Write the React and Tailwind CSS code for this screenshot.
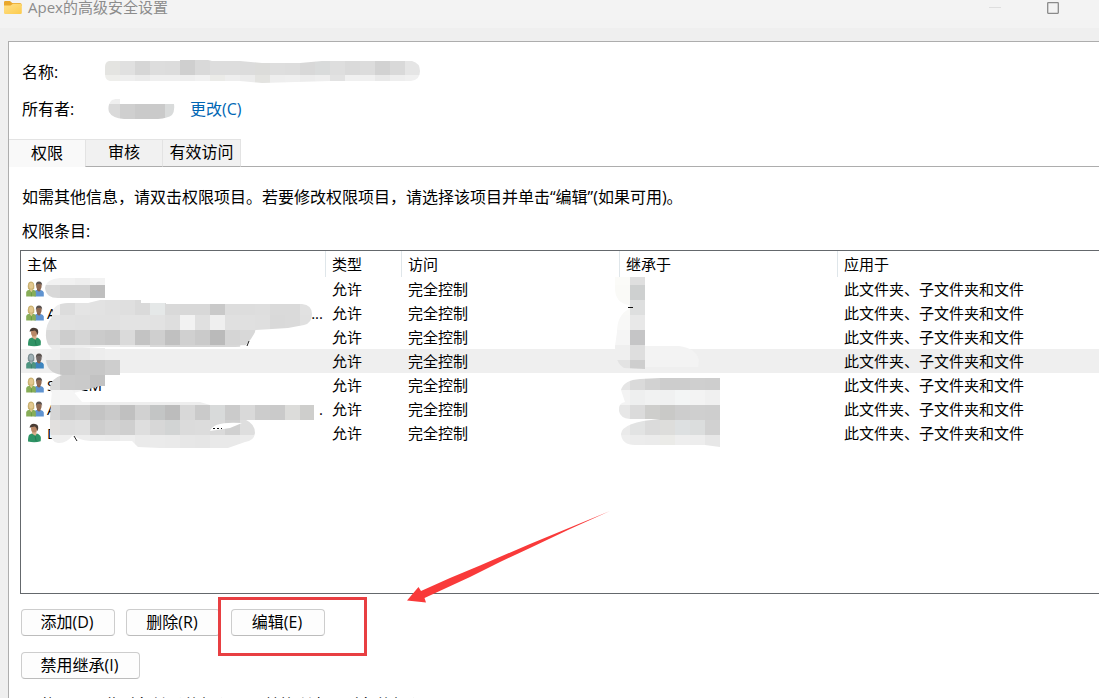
import React from "react";

function Mosaic({ id, shape, rows }) {
  return (
    <g clipPath={`url(#${id})`}>
      <clipPath id={id}>
        <path d={shape} />
      </clipPath>
      {rows.map(([x, y, height, colors]) =>
        colors
          .split(" ")
          .map((c, i) => (
            <rect key={`${x}-${y}-${i}`} x={x + i * 15} y={y} width="15.2" height={height} fill={`#${c}`} />
          ))
      )}
    </g>
  );
}

function FolderIcon() {
  return (
    <svg width="20" height="16" viewBox="0 0 20 16" aria-hidden="true">
      <defs>
        <linearGradient id="folder" x1="0" y1="0" x2="1" y2="1">
          <stop offset="0" stopColor="#ffe08a" />
          <stop offset="1" stopColor="#fccb4c" />
        </linearGradient>
      </defs>
      <path d="M1 2.2Q1 1 2.200 1H7l2.200 2H17q1.600 0 1.600 1.500V6H1z" fill="#e9a72c" />
      <path d="M1 5.500h6.500L10 3.800h7.400q1.400 0 1.400 1.300v7.700q0 1.200-1.300 1.200H2.300Q1 14 1 12.800z" fill="url(#folder)" />
    </svg>
  );
}

function GroupIcon({ muted }) {
  const hair = muted ? "#7d8f93" : "#c9b170";
  const face = muted ? "#9fb0b5" : "#e3c88f";
  const shirt = muted ? "#4d9480" : "#87ad57";
  return (
    <svg width="18" height="16" viewBox="0 0 18 16" className="shrink-0" aria-hidden="true">
      <path d="M8.500 15.500V11q.4-1.700 2.700-2.200l2 .8 1.600-.7q2.700.6 3 2.600v4z" fill={muted ? "#3c84bf" : "#5f93d0"} />
      <path d="M11 7h3.600v2.200l-1.500 1.600L11 9.300z" fill="#8a6048" />
      <ellipse cx="12.900" cy="4.900" rx="2.700" ry="3.500" fill={muted ? "#6f6563" : "#8f6a52"} />
      <path d="M9.900 5Q9.600.6 13 .6q3.500.2 3.100 4.400l-1-1.900-3.800-.2z" fill="#5a524e" />
      <path d="M2 7.500Q1 .7 5 .5q4 .2 3.200 7L6.700 9H3.400z" fill={hair} />
      <ellipse cx="5.200" cy="4.800" rx="2.100" ry="3" fill={face} />
      <path d="M.2 15.500V11q.4-1.900 3.300-2.300l1.800 1 1.800-1q2.600.5 2.700 2.300v4.500z" fill={shirt} />
      <path d="M3.900 8.600h2.800l-1.300 3z" fill={face} />
      <path d="M5.400 11.300v4" stroke={muted ? "#397967" : "#65923f"} strokeWidth=".8" />
    </svg>
  );
}

function UserIcon() {
  return (
    <svg width="18" height="20" viewBox="0 0 18 20" className="shrink-0" aria-hidden="true">
      <path d="M2 18.500q0-6 1.600-7l3-1.300 2.700 1.500 1.700-1.200q3.500 1.300 3.900 4.200l-.2 3.600q-6 1.600-12.700.2z" fill="#2f9365" />
      <path d="M6 8h4.500v3l-1.200 2L6 10.600z" fill="#d9b08d" />
      <ellipse cx="8.100" cy="5.600" rx="3.100" ry="4" fill="#b98867" />
      <path d="M3.700 5Q3.500 1 7.900.8q4.900.2 4.300 5l-.9 2.400Q10.900 4.600 9 3.400L4.800 4.300z" fill="#493c34" />
      <path d="M8.900 12.500l1.300 5.800" stroke="#1f7650" strokeWidth=".8" />
    </svg>
  );
}

const entries = [
  { kind: "group", name: "", end: "" },
  { kind: "group", name: "A", end: "..." },
  { kind: "user", name: "", end: "" },
  { kind: "muted", name: "", end: "" },
  { kind: "group", name: "SYSTEM", end: "" },
  { kind: "group", name: "A", end: "." },
  { kind: "user", name: "D", end: "" },
];

function PrincipalIcon({ kind }) {
  return kind === "user" ? <UserIcon /> : <GroupIcon muted={kind === "muted"} />;
}

function Redactions() {
  return (
    <svg
      className="pointer-events-none absolute left-0 top-0"
      width="720"
      height="210"
      viewBox="21 251 720 210"
      aria-hidden="true"
    >
      <Mosaic
        id="m1"
        shape="M105 278H60Q46 279 45 288Q46 298 58 298H105z"
        rows={[
          [45, 270, 15.2, "f2f2f2 f1f1f1 eeeeee f2f2f2"],
          [45, 285, 15, "d8d8d8 d2d2d2 d2d2d2 bfbfbf"],
        ]}
      />
      <Mosaic
        id="m2"
        shape="M52 313Q54 303 68 303H88L100 300H141V303H166V304H302Q312 305 312 314Q312 323 304 325L288 328L256 330Q252 339 245 346Q242 347 230 347L100 347Q80 348 66 349H52Q45 343 46 333Q46 324 52 317z"
        rows={[
          [45, 300, 15.2, "eeeeee dcdcdc e4e4e4 e2e2e2 e0e0e0 dfdfdf dadada e5e8e8 d9d9d9 d8d8d8 d8d8d8 c9c9c9 dddddd dddddd dedede dadada dadada e1e1e1 dcdcdc"],
          [45, 315, 15.2, "e5e5e5 e2e2e2 e1e1e1 e1e1e1 e1e1e1 e3e3e3 e3e3e3 e2e2e2 dedede f2f2f2 e0e0e0 efefef e0e0e0 e0e0e0 dfdfdf d9d9d9 dadada e0e0e0 e3e3e3"],
          [45, 330, 15.2, "dadada cdcdcd d5d5d5 cbcbcb c8c8c8 dadada c3c3c3 cfcfcf c0c0c0 d0d0d0 cacaca bababa d5d5d5 d8d8d8"],
          [45, 345, 6, "ededed efefef efefef eeeeee eeeeee eaeaea e7e7e7 dadada d6d6d6 d6d6d6 d6d6d6 d6d6d6 d8d8d8"],
        ]}
      />
      <Mosaic
        id="m3"
        shape="M57 348Q46 350 46 360Q47 373 62 375Q50 379 50 388Q50 394 57 394H70L85 390L100 386H105V375H120V360H105V348z"
        rows={[
          [45, 345, 15.2, "ededed e5e5e5 e8e8e8 ededed"],
          [45, 360, 15.2, "d2d2d2 c4c4c4 c9c9c9 c8c8c8 cecece"],
          [45, 375, 15.2, "d8d8d8 cbcbcb cacaca c2c2c2"],
          [45, 390, 6, "f0f0f0 f2f2f2 f4f4f4 f8f8f8"],
        ]}
      />
      <Mosaic
        id="m4"
        shape="M52 390H72L82 402H200L210 405H314V420H246Q255 424 255 433Q254 441 245 442L228 448H160L138 447L132 441H90Q78 440 73 435Q66 444 58 443Q50 442 50 430V419L51 402z"
        rows={[
          [45, 390, 15.2, "f4f4f4 f5f5f5 f5f5f5 eeeeee eeeeee eeeeee eeeeee eeeeee eeeeee eeeeee eeeeee eeeeee"],
          [45, 405, 15.2, "d5d5d5 cacaca cecece c4c4c4 cacaca c0c0c0 d1d1d1 c3c5c5 bcbcbc d8d8d8 cacaca d8dada cbcbcb d9d9d9 cccccc cacaca dcdcda cececc"],
          [45, 420, 15.2, "e2e0de dedede e0e0e0 cdcdcd d2d2d2 cfcfcf dedede d7d7d7 d2d4d4 dbdbdb dcdcdc dadada d0d0d0 dedede"],
          [45, 435, 15.2, "eeeeee efefef eeeeee ececec ebebeb eeeeee eaeaea ebebeb eaeaea e7e7e7 e6e6e6 e9e9e9 e9e9e9 ebebeb"],
        ]}
      />
      <path d="M210 431Q213 421 242 423L230 428Z" fill="#fff" />
      <path d="M213 428.500h2M217 428.500h2M221 428.500h1" stroke="#111" />
      <path d="M74 436l3 5M249 341l-2 5" stroke="#222" fill="none" />
      <path d="M645 346H679Q696 348 699 360L698 367H645z" fill="#f3f3f3" />
      <Mosaic
        id="m5"
        shape="M615 277H645V369L624 368Q615 363 615 346L617 332Q617 315 629 309V305Q615 303 615 288z"
        rows={[
          [615, 270, 15.2, "fbfbf8 dfdfdf"],
          [615, 285, 15.2, "fafaf7 ced0d0"],
          [615, 300, 15.2, "f9f9f7 dedfdf"],
          [615, 315, 15.2, "f8f8f7 e8e8e8"],
          [615, 330, 15.2, "f5f5f5 c5c5c6"],
          [615, 345, 15.2, "efefef dedede"],
          [615, 360, 10, "e3e3e3 cecece"],
        ]}
      />
      <path d="M628 307.500h5" stroke="#111" />
      <Mosaic
        id="m6"
        shape="M720 378H660L640 379Q624 380 621 390L625 402Q618 403 619 411Q620 418 630 419H660Q622 422 621 434Q622 445 635 445H705L720 447z"
        rows={[
          [615, 375, 15.2, "e5e5e5 dadada d2d2d2 cdcdcd cdcdcd cfcfcf cecece"],
          [615, 390, 15.2, "f3f3f3 eeefef f1f2f2 f0f1f1 f3f5f5 f3f3f3 f0f0f0"],
          [615, 405, 15.2, "e7e7e7 dbdbdb cececc c9c9c7 cdcdcd cfcfcf cecece"],
          [615, 420, 15.2, "eaeaea e2e3e3 dbdbdb dddddb dde0e1 dbdddd d1d1d1"],
          [615, 435, 15.2, "eeeeee ececec ebebeb ebebe8 eeeeee ededed e7e7e7"],
        ]}
      />
    </svg>
  );
}

const pushButton =
  "h-[27px] rounded-[4px] border border-[#cdcdcd] border-b-[#bcbcbc] bg-[#fdfdfd] pb-px pr-0.5 leading-6 text-center whitespace-nowrap";

const tab = "border-[#e3e3e3] pb-0.5 leading-6 whitespace-nowrap";

export default function App() {
  return (
    <div className="flex h-screen flex-col overflow-hidden bg-[#efefef] font-['Open_Sans','Noto_Sans_CJK_SC',sans-serif] text-[16px] leading-6 text-black">
      <header className="flex h-7 shrink-0 items-start justify-between bg-[#f3f3f3] pl-[3px] pr-10 text-[15px] leading-[14px] text-[#8c8c8c]">
        <h1 className="flex gap-[5px]">
          <FolderIcon />
          Apex的高级安全设置
        </h1>
        <div className="flex gap-[46px]">
          <button type="button" aria-label="最小化" className="h-4 w-3">
            <svg width="12" height="16" viewBox="0 0 12 16" aria-hidden="true">
              <path d="M0 7.500h12" stroke="#dedede" />
            </svg>
          </button>
          <button type="button" aria-label="最大化" className="h-4 w-3">
            <svg width="12" height="16" viewBox="0 0 12 16" aria-hidden="true">
              <rect x=".7" y="2.700" width="10.600" height="10.600" rx=".5" fill="none" stroke="#8a8a8a" strokeWidth="1.300" />
            </svg>
          </button>
        </div>
      </header>

      <main className="ml-2 mt-[13px] grow border-l border-t border-[#adadad] bg-white">
        <dl className="pl-[13px] pt-[18px]">
          <div className="flex h-6">
            <dt className="w-[83px]">名称:</dt>
            <dd>
              <svg width="316" height="24" viewBox="105 60 316 24" role="img" aria-label="已隐藏">
                <Mosaic
                  id="name"
                  shape="M109 61H180V60H208L212 61H240L262 63H300L322 61H412Q420 63 420 71Q420 80 411 81H352L330 81L262 83L240 81H110Q105 80 105 74V67Q105 62 109 61z"
                  rows={[
                    [105, 60, 15.2, "e4e4e1 e0e0e0 d6d6d6 dddddd dcdcdc cfcfcf d9d9d9 dddddd dddddd dcdcdc dcdcda dedede dddddd d8d8d8 d9dbdb dedede dadada dcdcdc d2d2d2 d9d9d9 e5e5e5"],
                    [105, 75, 10, "eeeeeb eeeeee ebebeb efefef efefef eeeeee f1f1f1 ebebe8 eeeeee ebebeb e3e3e0 eeeeee efefef ececec eeeeee e2e2e2 f0f0f0 f0f0f0 e9e9e9 eeeeee f0f0f0"],
                  ]}
                />
              </svg>
            </dd>
          </div>
          <div className="mt-3 flex h-[26px] items-center">
            <dt className="w-[86px]">所有者:</dt>
            <dd className="flex items-center gap-[15px]">
              <svg width="67" height="20" viewBox="108 100 67 20" role="img" aria-label="已隐藏">
                <Mosaic
                  id="owner"
                  shape="M112 101Q118 99 120 100V105H174Q175 112 172 116Q168 119 158 120H124Q112 119 109 113Q107 106 112 101z"
                  rows={[
                    [105, 90, 15.2, "efefef e9e9e9 dddddd dddddd dddddd"],
                    [105, 105, 15.2, "dadada cfcfcf cacaca cacaca d9dbdb"],
                  ]}
                />
              </svg>
              <a href="#change" className="text-[#0066b4]">
                更改(C)
              </a>
            </dd>
          </div>
        </dl>

        <div role="tablist" className="mt-[17px] flex h-7">
          <button type="button" role="tab" aria-selected="true" className={`${tab} w-[76px] border-t bg-[#f9f9f9]`}>
            权限
          </button>
          <button type="button" role="tab" aria-selected="false" className={`${tab} w-[78px] border border-b-[#adadad] bg-[#f1f1f1]`}>
            审核
          </button>
          <button type="button" role="tab" aria-selected="false" className={`${tab} w-[78px] border border-l-0 border-b-[#adadad] bg-[#f1f1f1]`}>
            有效访问
          </button>
          <div className="grow border-b border-[#adadad]" />
        </div>

        <section className="pl-[11px]">
          <p className="ml-0.5 mt-[18px] whitespace-nowrap">
            如需其他信息，请双击权限项目。若要修改权限项目，请选择该项目并单击“编辑”(如果可用)。
          </p>
          <h2 id="entries" className="ml-0.5 mt-[10px]">
            权限条目:
          </h2>

          <div className="relative mt-[7px] h-[344px] border border-r-0 border-[#64686c]">
            <table aria-labelledby="entries" className="w-full table-fixed border-separate border-spacing-0 text-left text-[15px] leading-6 whitespace-nowrap">
              <colgroup>
                <col className="w-[305px]" />
                <col className="w-[76px]" />
                <col className="w-[218px]" />
                <col className="w-[218px]" />
                <col />
              </colgroup>
              <thead>
                <tr className="h-[26px]">
                  {["主体", "类型", "访问", "继承于"].map((label) => (
                    <th key={label} className="border-r border-[#dfe6ea] py-0 pl-1.5 pr-0 font-normal">
                      {label}
                    </th>
                  ))}
                  <th className="py-0 pl-1.5 pr-0 font-normal">应用于</th>
                </tr>
              </thead>
              <tbody>
                {entries.map((entry, i) => (
                  <tr key={i} className={entry.kind === "muted" ? "h-6 bg-[#efefef]" : "h-6"}>
                    <td className="p-0">
                      <div className="flex h-6 items-center justify-between pl-[5px] pr-[3px]">
                        <span className="flex items-center gap-[3px]">
                          <PrincipalIcon kind={entry.kind} />
                          {entry.name}
                        </span>
                        <span>{entry.end}</span>
                      </div>
                    </td>
                    <td className="py-0 pl-1.5 pr-0">允许</td>
                    <td className="py-0 pl-1.5 pr-0">完全控制</td>
                    <td className="p-0" />
                    <td className="py-0 pl-1.5 pr-0">此文件夹、子文件夹和文件</td>
                  </tr>
                ))}
              </tbody>
            </table>
            <Redactions />
          </div>

          <div className="ml-px mt-[15px] flex gap-[11px]">
            <button type="button" className={`${pushButton} w-[94px]`}>
              添加(D)
            </button>
            <button type="button" className={`${pushButton} w-[94px]`}>
              删除(R)
            </button>
            <div className="relative flex">
              <button type="button" className={`${pushButton} w-[94px]`}>
                编辑(E)
              </button>
              <svg
                className="pointer-events-none absolute -left-[13px] -top-[99px]"
                width="395"
                height="148"
                viewBox="218 510 395 148"
                aria-hidden="true"
              >
                <rect x="219.500" y="598.500" width="146" height="56" fill="none" stroke="#e83f42" strokeWidth="3" />
                <path d="M610 511L530 544L480 565.500L450 578L421 591L418.500 587L407 600.500L426 602.500L424.500 598L470 577L500 562L530 548L570 529z" fill="#f93a3a" />
              </svg>
            </div>
          </div>
          <button type="button" className={`${pushButton} ml-px mt-4 w-[119px]`}>
            禁用继承(I)
          </button>
          <label className="ml-px mt-3.5 flex items-center gap-[6px] whitespace-nowrap">
            <input type="checkbox" className="mt-1.5 size-[13px] appearance-none rounded-[3px] border border-[#8a8a8a] bg-white" />
            使用可从此对象继承的权限项目替换所有子对象的权限项目(P)
          </label>
        </section>
      </main>
    </div>
  );
}
